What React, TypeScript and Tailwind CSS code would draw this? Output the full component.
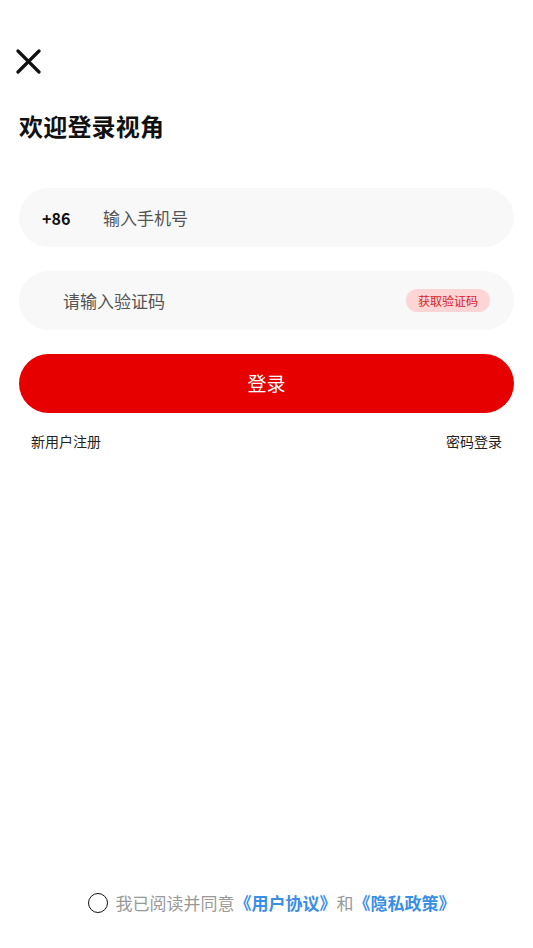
import { useState } from "react";

const FONT = { fontFamily: '"Noto Sans CJK SC", "Noto Sans", sans-serif' };

export default function App() {
  const [agreed, setAgreed] = useState(false);

  return (
    <div className="flex min-h-screen flex-col bg-white text-[#111]" style={FONT}>
      {/* 关闭 */}
      <div className="pl-[16px] pt-[49px]">
        <button className="block h-[25px] w-[25px]">
          <svg viewBox="0 0 25 25" className="h-[25px] w-[25px]">
            <path d="M2 2 L23 23 M23 2 L2 23" stroke="#111" strokeWidth="3.2" strokeLinecap="round" fill="none" />
          </svg>
        </button>
      </div>

      <div className="px-[19px]">
        {/* 标题 */}
        <h1 className="mt-[36px] text-[24px] font-bold leading-[32px] tracking-[0.2px]">欢迎登录视角</h1>

        {/* 手机号 */}
        <div className="mt-[46px] flex h-[59px] items-center rounded-full bg-[#f8f8f8] pl-[23px]">
          <span className="w-[61px] text-[16px] font-bold">+86</span>
          <span className="text-[17px] text-[#555]">输入手机号</span>
        </div>

        {/* 验证码 */}
        <div className="mt-[24px] flex h-[59px] items-center justify-between rounded-full bg-[#f8f8f8] pl-[44px] pr-[24px]">
          <span className="text-[17px] text-[#555]">请输入验证码</span>
          <span className="flex h-[23px] w-[84px] items-center justify-center rounded-full bg-[#fdd5d5] text-[12px] text-[#d8232a]">
            获取验证码
          </span>
        </div>

        {/* 登录 */}
        <button className="mt-[24px] flex h-[59px] w-full items-center justify-center rounded-full bg-[#e60000] text-[19px] text-white">
          登录
        </button>

        <div className="mt-[18px] flex justify-between px-[12px] text-[14px] leading-[20px] text-[#222]">
          <span>新用户注册</span>
          <span>密码登录</span>
        </div>
      </div>

      {/* 协议 */}
      <div className="mt-auto flex items-center justify-center pb-[33px] pl-[10px]">
        <button
          onClick={() => setAgreed(!agreed)}
          className={`mr-[8px] h-[20px] w-[20px] rounded-full border-[1.5px] border-[#111] ${agreed ? "bg-[#e60000]" : ""}`}
        />
        <p className="text-[17px] leading-[24px] text-[#999]">
          我已阅读并同意<span className="font-bold text-[#3a8ee6]">《用户协议》</span>和
          <span className="font-bold text-[#3a8ee6]">《隐私政策》</span>
        </p>
      </div>
    </div>
  );
}
